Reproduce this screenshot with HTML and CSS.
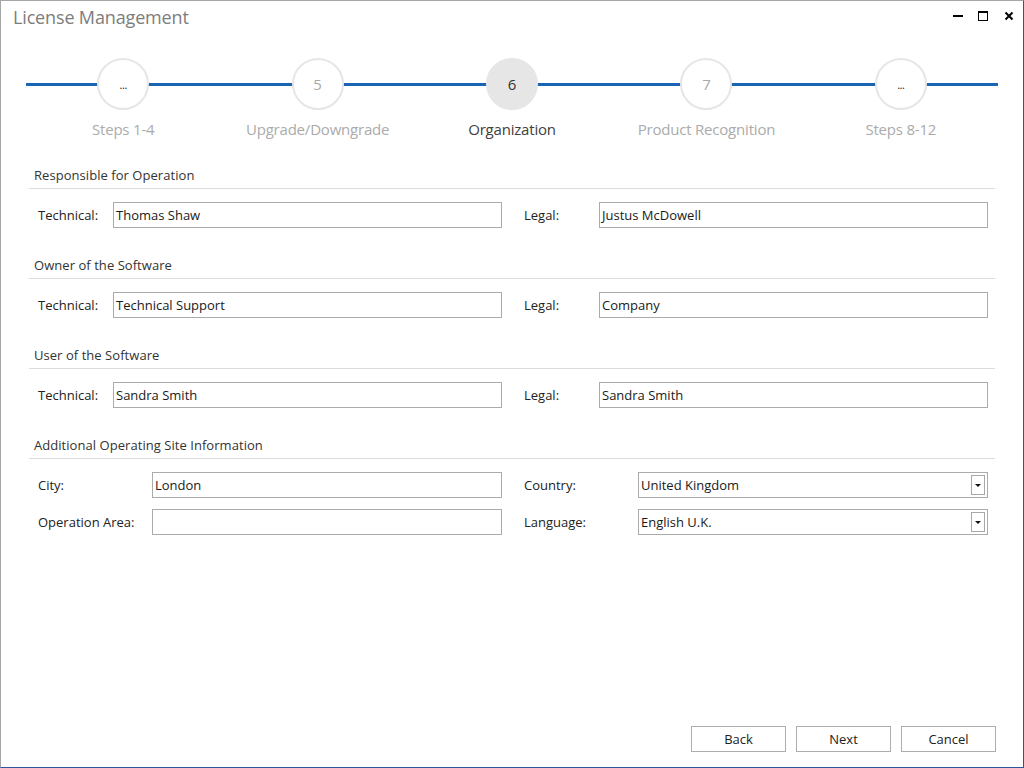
FILE: index.html
```html
<!DOCTYPE html>
<html lang="en">
<head>
<meta charset="utf-8">
<title>License Management</title>
<link rel="stylesheet" href="styles.css">
</head>
<body>
<div class="window">
  <div class="titlebar">
    <div class="title">License Management</div>
    <svg class="controls" width="70" height="34" viewBox="0 0 70 34">
      <rect x="5" y="14" width="10" height="2" fill="#000"/>
      <rect x="30.5" y="10.5" width="9" height="9" fill="none" stroke="#000" stroke-width="1"/>
      <rect x="30" y="10" width="10" height="2" fill="#000"/>
      <path d="M57.5 11.5 L64.5 18.5 M64.5 11.5 L57.5 18.5" stroke="#000" stroke-width="2" fill="none"/>
    </svg>
  </div>

  <div class="stepper">
    <div class="step">
      <div class="circle dots">...</div>
      <div class="step-label">Steps 1-4</div>
    </div>
    <div class="step">
      <div class="circle">5</div>
      <div class="step-label">Upgrade/Downgrade</div>
    </div>
    <div class="step active">
      <div class="circle">6</div>
      <div class="step-label">Organization</div>
    </div>
    <div class="step">
      <div class="circle">7</div>
      <div class="step-label">Product Recognition</div>
    </div>
    <div class="step">
      <div class="circle dots">...</div>
      <div class="step-label">Steps 8-12</div>
    </div>
  </div>

  <div class="section">
    <div class="section-header">Responsible for Operation</div>
    <div class="rows">
      <div class="field"><span class="label">Technical:</span><div class="input">Thomas Shaw</div></div>
      <div class="field"><span class="label">Legal:</span><div class="input">Justus McDowell</div></div>
    </div>
  </div>

  <div class="section">
    <div class="section-header">Owner of the Software</div>
    <div class="rows">
      <div class="field"><span class="label">Technical:</span><div class="input">Technical Support</div></div>
      <div class="field"><span class="label">Legal:</span><div class="input">Company</div></div>
    </div>
  </div>

  <div class="section">
    <div class="section-header">User of the Software</div>
    <div class="rows">
      <div class="field"><span class="label">Technical:</span><div class="input">Sandra Smith</div></div>
      <div class="field"><span class="label">Legal:</span><div class="input">Sandra Smith</div></div>
    </div>
  </div>

  <div class="section last">
    <div class="section-header">Additional Operating Site Information</div>
    <div class="rows wide">
      <div class="field"><span class="label">City:</span><div class="input">London</div></div>
      <div class="field"><span class="label">Country:</span><div class="input select">United Kingdom<span class="drop"><span class="arrow"></span></span></div></div>
      <div class="field"><span class="label">Operation Area:</span><div class="input"></div></div>
      <div class="field"><span class="label">Language:</span><div class="input select">English U.K.<span class="drop"><span class="arrow"></span></span></div></div>
    </div>
  </div>

  <div class="footer">
    <button class="btn">Back</button>
    <button class="btn">Next</button>
    <button class="btn">Cancel</button>
  </div>
</div>
</body>
</html>
```

FILE: styles.css
```css
html, body {
  margin: 0;
  padding: 0;
  background: #ffffff;
}

body {
  font-family: "Open Sans", "Noto Sans", sans-serif;
  font-size: 13px;
  color: #222222;
}

.window {
  box-sizing: border-box;
  width: 1024px;
  height: 768px;
  border-top: 1px solid #a6a6a6;
  border-left: 1px solid #a6a6a6;
  border-right: 1px solid #2b579a;
  border-bottom: 1px solid #2b579a;
  display: flex;
  flex-direction: column;
  background: #ffffff;
}

.titlebar {
  height: 33px;
  display: flex;
  align-items: flex-start;
  padding-left: 12px;
  padding-right: 5px;
}

.title {
  font-size: 18px;
  line-height: 22px;
  padding-top: 5px;
  color: #7d7d7d;
  letter-spacing: -0.15px;
}

.controls {
  margin-left: auto;
  display: block;
}

.stepper {
  position: relative;
  display: flex;
  margin: 24px 25px 0 25px;
  width: 972px;
}

.stepper::before {
  content: "";
  position: absolute;
  left: 0;
  right: 0;
  top: 25px;
  height: 3px;
  background: #1a64b4;
}

.step {
  flex: 1;
  display: flex;
  flex-direction: column;
  align-items: center;
}

.circle {
  position: relative;
  z-index: 1;
  box-sizing: border-box;
  width: 52px;
  height: 52px;
  border-radius: 50%;
  border: 2px solid #e6e6e6;
  background: #ffffff;
  display: flex;
  align-items: center;
  justify-content: center;
  font-size: 15px;
  color: #a9a9a9;
}

.circle.dots {
  font-size: 11px;
  color: #222222;
  letter-spacing: -0.5px;
}

.step.active .circle {
  background: #e6e6e6;
  color: #333333;
}

.step-label {
  margin-top: 9px;
  font-size: 15px;
  line-height: 20px;
  color: #ababab;
  white-space: nowrap;
  letter-spacing: -0.2px;
}

.step.active .step-label {
  color: #404040;
}

.section {
  margin: 27px 28px 0 28px;
}

.section + .section {
  margin-top: 28px;
}

.section-header {
  padding-left: 5px;
  line-height: 18px;
  padding-bottom: 4px;
  border-bottom: 1px solid #dcdcdc;
  color: #333333;
  letter-spacing: 0.05px;
}

.rows {
  display: grid;
  grid-template-columns: 464px 464px;
  column-gap: 22px;
  row-gap: 11px;
  margin-top: 13px;
  padding-left: 9px;
}

.field {
  display: flex;
  align-items: center;
}

.label {
  width: 75px;
  flex: none;
  color: #222222;
}

.rows.wide .label {
  width: 114px;
}

.input {
  flex: 1;
  box-sizing: border-box;
  height: 26px;
  border: 1px solid #ababab;
  padding-left: 2px;
  display: flex;
  align-items: center;
  color: #1a1a1a;
  position: relative;
}

.input.select {
  padding-right: 20px;
}

.drop {
  position: absolute;
  right: 2px;
  top: 2px;
  bottom: 2px;
  width: 14px;
  box-sizing: border-box;
  border: 1px solid #a8a8a8;
  background: #ffffff;
  display: flex;
  align-items: center;
  justify-content: center;
}

.arrow {
  width: 0;
  height: 0;
  border-left: 3px solid transparent;
  border-right: 3px solid transparent;
  border-top: 3px solid #111111;
  margin-top: 1px;
}

.footer {
  margin-top: auto;
  display: flex;
  justify-content: flex-end;
  gap: 10px;
  padding: 0 27px 15px 0;
}

.btn {
  box-sizing: border-box;
  width: 95px;
  height: 26px;
  border: 1px solid #adadad;
  background: #ffffff;
  font-family: "Open Sans", "Noto Sans", sans-serif;
  font-size: 13px;
  color: #222222;
  padding: 0;
}
```
